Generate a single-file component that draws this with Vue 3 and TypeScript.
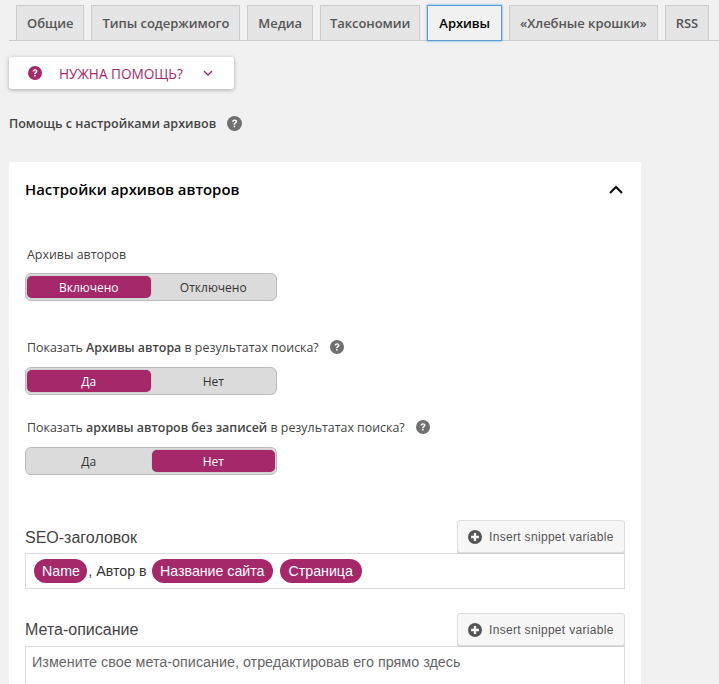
<template>
  <div class="page">
    <nav class="tabs">
      <a
        v-for="tab in tabs"
        :key="tab"
        class="tab"
        :class="{ active: tab === activeTab }"
      >{{ tab }}</a>
    </nav>

    <button class="help-btn" type="button">
      <svg class="help-icon" viewBox="0 0 16 16" width="14" height="14">
        <circle cx="8" cy="8" r="8" fill="#a4286a" />
        <path :d="questionMark" fill="#fff" />
      </svg>
      <span class="help-label">НУЖНА ПОМОЩЬ?</span>
      <svg class="help-caret" viewBox="0 0 10 6" width="10" height="6">
        <path d="M1 1l4 4 4-4" fill="none" stroke="#a4286a" stroke-width="1.300" />
      </svg>
    </button>

    <div class="help-row">
      <span>Помощь с настройками архивов</span>
      <svg class="q-icon" viewBox="0 0 16 16" width="15" height="15">
        <circle cx="8" cy="8" r="8" fill="#707070" />
        <path :d="questionMark" fill="#fff" />
      </svg>
    </div>

    <section class="card">
      <header class="card-head">
        <h2>Настройки архивов авторов</h2>
        <svg viewBox="0 0 14 9" width="14" height="9">
          <path d="M1 8l6-6 6 6" fill="none" stroke="#111" stroke-width="2.200" />
        </svg>
      </header>

      <div class="field first">
        <div class="field-label"><span>Архивы авторов</span></div>
        <div class="toggle first-toggle">
          <span class="opt on">Включено</span>
          <span class="opt">Отключено</span>
        </div>
      </div>

      <div class="field second">
        <div class="field-label">
          <span>Показать <b>Архивы автора</b> в результатах поиска?</span>
          <svg class="q-icon" viewBox="0 0 16 16" width="14" height="14">
            <circle cx="8" cy="8" r="8" fill="#707070" />
            <path :d="questionMark" fill="#fff" />
          </svg>
        </div>
        <div class="toggle">
          <span class="opt on">Да</span>
          <span class="opt">Нет</span>
        </div>
      </div>

      <div class="field third">
        <div class="field-label">
          <span>Показать <b>архивы авторов без записей</b> в результатах поиска?</span>
          <svg class="q-icon" viewBox="0 0 16 16" width="14" height="14">
            <circle cx="8" cy="8" r="8" fill="#707070" />
            <path :d="questionMark" fill="#fff" />
          </svg>
        </div>
        <div class="toggle">
          <span class="opt">Да</span>
          <span class="opt on">Нет</span>
        </div>
      </div>

      <div class="editor seo">
        <div class="editor-head">
          <span class="editor-title">SEO-заголовок</span>
          <button class="snippet-btn" type="button">
            <svg viewBox="0 0 16 16" width="14" height="14">
              <circle cx="8" cy="8" r="8" fill="#555" />
              <path :d="plusMark" fill="#f7f7f7" />
            </svg>
            Insert snippet variable
          </button>
        </div>
        <div class="editor-box title-box">
          <span class="pill first-pill">Name</span>
          <span class="plain">, Автор в</span>
          <span class="pill">Название сайта</span>
          <span class="pill last-pill">Страница</span>
        </div>
      </div>

      <div class="editor meta">
        <div class="editor-head">
          <span class="editor-title">Мета-описание</span>
          <button class="snippet-btn" type="button">
            <svg viewBox="0 0 16 16" width="14" height="14">
              <circle cx="8" cy="8" r="8" fill="#555" />
              <path :d="plusMark" fill="#f7f7f7" />
            </svg>
            Insert snippet variable
          </button>
        </div>
        <div class="editor-box meta-box">Измените свое мета-описание, отредактировав его прямо здесь</div>
      </div>
    </section>
  </div>
</template>

<script setup lang="ts">
const tabs: string[] = [
  'Общие',
  'Типы содержимого',
  'Медиа',
  'Таксономии',
  'Архивы',
  '«Хлебные крошки»',
  'RSS',
];
const activeTab = 'Архивы';

const questionMark =
  'M5.3 6.2C5.4 4.6 6.5 3.6 8.1 3.6c1.6 0 2.7 1 2.7 2.3 0 1-.5 1.6-1.3 2.1-.7.4-.9.7-.9 1.3H7c0-1.100.3-1.700 1.200-2.300.6-.4.8-.7.8-1.100 0-.5-.4-.8-.9-.8-.6 0-1 .4-1.100 1.100z M7 10.300h1.700V12H7z';
const plusMark = 'M6.700 3.500h2.600v3.200h3.200v2.600H9.300v3.200H6.700V9.300H3.500V6.700h3.200z';
</script>

<style>
html,
body {
  margin: 0;
  background: #f1f1f1;
  overflow: hidden;
}
</style>

<style scoped>
.page {
  width: 719px;
  height: 684px;
  overflow: hidden;
  box-sizing: border-box;
  padding: 5px 0 0 9px;
  font-family: "Open Sans", sans-serif;
  font-size: 13px;
  color: #444;
}

.tabs {
  display: flex;
  gap: 7px;
  height: 36px;
  box-sizing: border-box;
  padding-left: 7px;
  border-bottom: 1px solid #ccc;
}

.tab {
  box-sizing: border-box;
  height: 35px;
  padding: 0 10px;
  line-height: 35px;
  font-size: 13px;
  font-weight: 600;
  letter-spacing: -0.05px;
  color: #555;
  background: #e5e5e5;
  border: 1px solid #ccc;
  border-bottom: none;
  white-space: nowrap;
}

.tab:nth-child(4) {
  padding: 0 9px;
}

.tab.active {
  height: 36px;
  padding: 0 11px;
  color: #000;
  background: #f1f1f1;
  border: 1px solid #5b9dd9;
  box-shadow: 0 0 2px rgba(30, 140, 190, 0.8);
}

.help-btn {
  display: flex;
  align-items: center;
  width: 225px;
  height: 32px;
  margin-top: 16px;
  padding: 0 0 0 19px;
  box-sizing: border-box;
  background: #fff;
  border: none;
  border-radius: 3px;
  box-shadow: 0 1px 4px rgba(0, 0, 0, 0.3);
  font-family: "Open Sans", sans-serif;
  font-size: 13.6px;
  color: #a4286a;
}

.help-label {
  margin-left: 17px;
}

.help-caret {
  margin-left: 20px;
}

.help-row {
  display: flex;
  align-items: center;
  gap: 11px;
  margin-top: 26px;
  height: 17px;
  font-size: 12.5px;
  font-weight: 600;
  color: #444;
}

.card {
  width: 632px;
  height: 600px;
  margin-top: 30px;
  box-sizing: border-box;
  padding: 0 16px;
  background: #fff;
}

.card-head {
  display: flex;
  align-items: center;
  justify-content: space-between;
  height: 54px;
  padding-right: 2px;
}

.card-head h2 {
  margin: 0;
  font-size: 14.9px;
  font-weight: 600;
  color: #000;
}

.field-label {
  display: flex;
  align-items: center;
  height: 18px;
  padding-left: 2px;
  font-size: 12.4px;
  color: #444;
  white-space: nowrap;
}

.field-label b {
  font-weight: 600;
}

.field-label .q-icon {
  margin-left: 11px;
}

.field.first {
  margin-top: 29px;
}

.field.second {
  margin-top: 37px;
}

.field.third {
  margin-top: 23px;
}

.toggle {
  display: flex;
  gap: 1px;
  width: 252px;
  height: 28px;
  margin-top: 11px;
  padding: 2px 1px;
  box-sizing: border-box;
  background: #dbdbdb;
  border: 1px solid #bbb;
  border-radius: 6px;
}

.toggle.first-toggle {
  margin-top: 10px;
}

.opt {
  flex: 1;
  display: flex;
  align-items: center;
  justify-content: center;
  font-size: 12px;
  color: #333;
  border-radius: 5px;
}

.opt.on {
  background: #a4286a;
  color: #fff;
  box-shadow: 0 0 1px #777;
}

.editor.seo {
  margin-top: 45px;
}

.editor.meta {
  margin-top: 24px;
}

.editor-head {
  display: flex;
  align-items: flex-end;
  justify-content: space-between;
  height: 33px;
}

.editor-title {
  padding-bottom: 6px;
  font-family: "Liberation Sans", sans-serif;
  font-size: 16px;
  color: #444;
}

.meta .editor-title {
  padding-bottom: 7px;
}

.snippet-btn {
  display: flex;
  align-items: center;
  gap: 7px;
  box-sizing: border-box;
  width: 168px;
  height: 33px;
  padding: 0 0 0 10px;
  background: #f7f7f7;
  border: 1px solid #ddd;
  border-radius: 3px;
  box-shadow: 0 1px 0 #ccc;
  font-family: "Liberation Sans", sans-serif;
  font-size: 12px;
  letter-spacing: 0.32px;
  color: #555;
}

.editor-box {
  box-sizing: border-box;
  width: 600px;
  background: #fff;
  border: 1px solid #ddd;
  font-family: "Liberation Sans", sans-serif;
  font-size: 14.2px;
}

.title-box {
  display: flex;
  align-items: center;
  height: 36px;
  padding-left: 8px;
  color: #333;
}

.pill {
  height: 24px;
  line-height: 24px;
  padding: 0 8px;
  margin-right: 7px;
  border-radius: 12px;
  background: #a4286a;
  color: #fff;
}

.first-pill {
  margin-right: 1px;
  padding-right: 7.5px;
}

.last-pill {
  padding: 0 9px;
}

.plain {
  margin-right: 5.5px;
}

.meta-box {
  height: 60px;
  padding: 7px 6px;
  font-size: 14.35px;
  color: #666;
}
</style>
